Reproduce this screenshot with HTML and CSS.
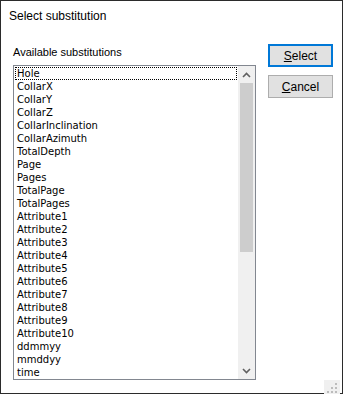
FILE: index.html
```html
<!DOCTYPE html>
<html>
<head>
  <title>Select substitution</title>
  <meta charset="UTF-8">
  <link rel="stylesheet" href="styles.css">
</head>
<body>
  <div class="dialog">
    <div class="title">Select substitution</div>

    <div class="content">
      <div class="left">
        <label class="caption">Available substitutions</label>
        <div class="listbox">
          <ul class="items">
            <li class="focused">Hole</li>
            <li>CollarX</li>
            <li>CollarY</li>
            <li>CollarZ</li>
            <li>CollarInclination</li>
            <li>CollarAzimuth</li>
            <li>TotalDepth</li>
            <li>Page</li>
            <li>Pages</li>
            <li>TotalPage</li>
            <li>TotalPages</li>
            <li>Attribute1</li>
            <li>Attribute2</li>
            <li>Attribute3</li>
            <li>Attribute4</li>
            <li>Attribute5</li>
            <li>Attribute6</li>
            <li>Attribute7</li>
            <li>Attribute8</li>
            <li>Attribute9</li>
            <li>Attribute10</li>
            <li>ddmmyy</li>
            <li>mmddyy</li>
            <li>time</li>
          </ul>
          <div class="scrollbar">
            <div class="arrow">
              <svg width="9" height="6" viewBox="0 0 9 6"><path d="M1 5 L4.5 1.5 L8 5" fill="none" stroke="#606060" stroke-width="1.6"/></svg>
            </div>
            <div class="track">
              <div class="thumb"></div>
            </div>
            <div class="arrow">
              <svg width="9" height="6" viewBox="0 0 9 6"><path d="M1 1 L4.5 4.5 L8 1" fill="none" stroke="#606060" stroke-width="1.6"/></svg>
            </div>
          </div>
        </div>
      </div>

      <div class="buttons">
        <button class="default"><u>S</u>elect</button>
        <button><u>C</u>ancel</button>
      </div>
    </div>

    <div class="footer">
      <svg class="grip" width="10" height="10" viewBox="0 0 10 10">
        <rect x="8" y="0" width="2" height="2" fill="#bcbcbc"/>
        <rect x="4" y="4" width="2" height="2" fill="#bcbcbc"/>
        <rect x="8" y="4" width="2" height="2" fill="#bcbcbc"/>
        <rect x="0" y="8" width="2" height="2" fill="#bcbcbc"/>
        <rect x="4" y="8" width="2" height="2" fill="#bcbcbc"/>
        <rect x="8" y="8" width="2" height="2" fill="#bcbcbc"/>
      </svg>
    </div>
  </div>
</body>
</html>
```

FILE: styles.css
```css
body {
  margin: 0;
  font-family: 'Liberation Sans', Arial, sans-serif;
  color: #000;
  background: #fff;
}

.dialog {
  width: 343px;
  height: 394px;
  box-sizing: border-box;
  border: 1px solid #2b2b2b;
  background: #fff;
  display: flex;
  flex-direction: column;
}

.title {
  font-size: 12px;
  line-height: 16px;
  padding: 7px 0 0 8px;
  height: 23px;
}

.content {
  display: flex;
  padding: 20px 0 0 12px;
  gap: 12px;
}

.left {
  display: flex;
  flex-direction: column;
}

.caption {
  font-size: 11px;
  line-height: 16px;
  height: 21px;
}

.listbox {
  width: 243px;
  height: 315px;
  box-sizing: border-box;
  border: 1px solid #828790;
  display: flex;
  overflow: hidden;
}

.items {
  flex: 1;
  list-style: none;
  margin: 0;
  padding: 1px 1px 0 1px;
  font-family: 'DejaVu Sans', sans-serif;
  font-size: 10px;
  line-height: 13px;
}

.items li {
  padding-left: 2px;
  height: 13px;
  box-sizing: border-box;
}

.items li.focused {
  outline: 1px dotted #000;
  outline-offset: -1px;
}

.scrollbar {
  width: 17px;
  background: #f0f0f0;
  display: flex;
  flex-direction: column;
}

.arrow {
  height: 17px;
  display: flex;
  align-items: center;
  justify-content: center;
}

.track {
  flex: 1;
  padding: 0 2px;
}

.thumb {
  height: 169px;
  background: #cdcdcd;
}

.buttons {
  display: flex;
  flex-direction: column;
  gap: 8px;
}

button {
  width: 65px;
  height: 23px;
  box-sizing: border-box;
  background: #e1e1e1;
  border: 1px solid #adadad;
  font-family: 'Liberation Sans', Arial, sans-serif;
  font-size: 12px;
  padding: 0;
  color: #000;
}

button.default {
  border: 2px solid #0078d7;
}

.footer {
  flex: 1;
  display: flex;
  justify-content: flex-end;
  align-items: flex-end;
  padding: 0 2px 2px 0;
}

.grip {
  display: block;
  background: #f0f0f0;
  padding: 3px;
}
```
